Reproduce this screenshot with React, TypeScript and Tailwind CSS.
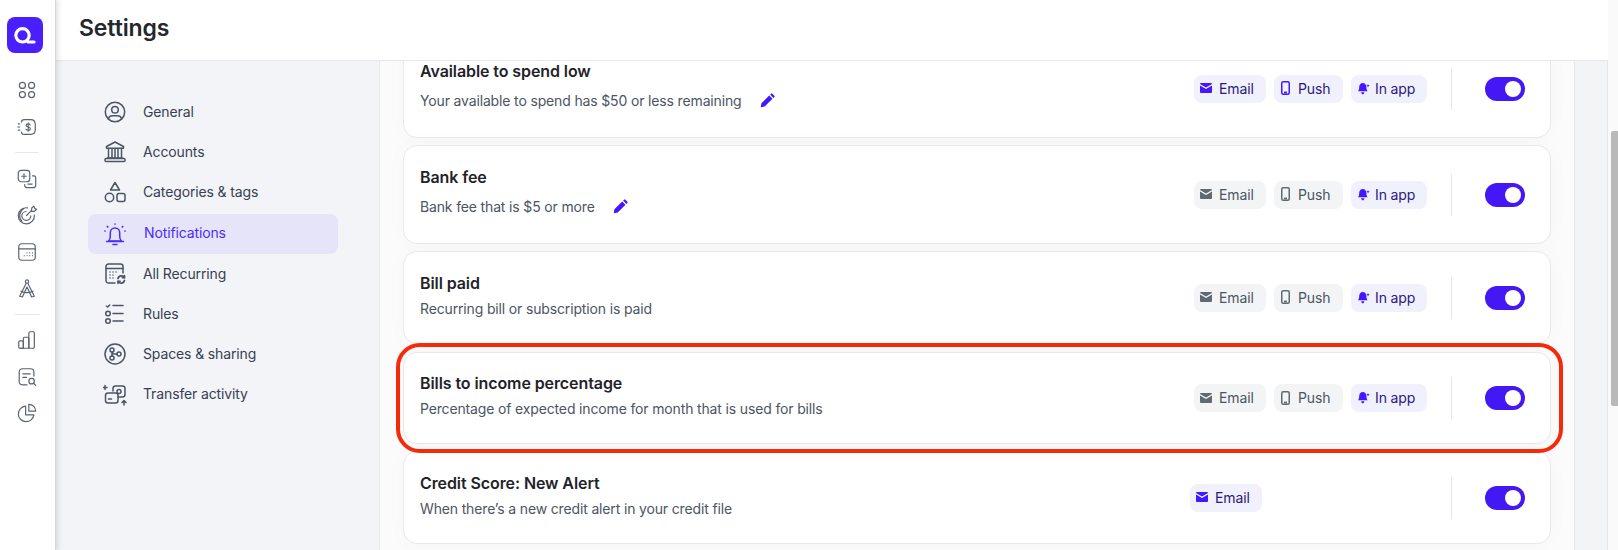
import React from "react";

type P = { className?: string };
const S = ({ className, children, size = 24, sw = 1.5 }: P & { children: React.ReactNode; size?: number; sw?: number }) => (
  <svg width={size} height={size} viewBox="0 0 24 24" fill="none" stroke="currentColor" strokeWidth={sw} strokeLinecap="round" strokeLinejoin="round" className={className}>
    {children}
  </svg>
);

const side: Record<string, React.ReactNode> = {
  grid: (<><circle cx="7" cy="7" r="3.300" /><circle cx="17" cy="7" r="3.300" /><circle cx="7" cy="17" r="3.300" /><circle cx="17" cy="17" r="3.300" /></>),
  dollar: (<><path d="M6 6.500C6 4.500 7.500 4 9 4h7c3 0 5 1.500 5 5v6c0 3.500-2 5-5 5H9c-1.500 0-3-.5-3-2.500" /><path d="M2.500 8.500H4M2 12h2M2.500 15.500H4" /><path d="M15.500 9.800c-.5-.8-1.300-1.200-2.300-1.200-1.200 0-2.100.6-2.100 1.700 0 2.300 4.500 1.200 4.500 3.500 0 1.100-1 1.800-2.300 1.800-1 0-2-.4-2.400-1.200M13.300 7.300v9.400" strokeWidth={1.200} /></>),
  plusminus: (<><rect x="2.500" y="2.500" width="12.500" height="12.500" rx="3" /><path d="M8.700 6.500v5M6.200 9h5" /><path d="M18 8.500h1.500a2 2 0 0 1 2 2V19a2.500 2.500 0 0 1-2.500 2.500h-7A2.500 2.500 0 0 1 9.500 19v-1" /><path d="M13 17.500h4.500" /></>),
  target: (<><path d="M12.500 4.200A8.800 8.800 0 1 0 20 12" /><path d="M11 8.200A4.800 4.800 0 1 0 16 13" /><path d="M8.500 5A9 9 0 0 0 6.500 19" /><path d="M11.500 12.500 17 7l.3-3 2.200-1.500 1 2.500 2 .7L20 8l-3 .1" /></>),
  calendar: (<><rect x="3" y="3" width="18" height="18" rx="3.500" /><path d="M3 8.500h18" /><path d="M9 16v.01M12 16v.01M15 16v.01M18 16v.01M12 13v.01M15 13v.01M18 13v.01" strokeWidth={1.200} /></>),
  compass: (<><circle cx="12" cy="5" r="1.800" /><path d="M11 7 4 21l3 .8L12 11l5 10.800 3-.8-7-14" /><path d="M5.500 15.500c4 2 9 2 13 0" /></>),
  bars: (<><rect x="3" y="13" width="5" height="8" rx="1.500" /><path d="M8 21V10.500A1.500 1.500 0 0 1 9.500 9H13a1 1 0 0 1 1 1v11" /><path d="M14 21V4.500A1.500 1.500 0 0 1 15.500 3H19a1 1 0 0 1 1 1v15.500a1.500 1.500 0 0 1-1.500 1.500H4.500" /></>),
  searchdoc: (<><path d="M12 20.500H7a3.500 3.500 0 0 1-3.500-3.500V6.500A3.500 3.500 0 0 1 7 3h9a3.500 3.500 0 0 1 3.500 3.500V11" /><path d="M7.500 8.500h8M7.500 12.500h4" /><circle cx="17" cy="16.500" r="3" /><path d="m19.300 19 2.200 2.200" /></>),
  pie: (<><path d="M10.500 4.500a8.500 8.500 0 1 0 9 9.500h-9z" /><path d="M14 2.500a7.500 7.500 0 0 1 7.500 7.500H14z" /></>),
};

const nav: Record<string, React.ReactNode> = {
  general: (<><circle cx="12" cy="12" r="9.700" /><circle cx="12" cy="9.800" r="3.300" /><path d="M5.500 18.500c.5-1.800 2-2.800 4-2.800h5c2 0 3.500 1 4 2.800" /></>),
  accounts: (<><path d="M12 2 3.500 6.500v1.700h17V6.500z" /><path d="M5.500 8.500V18M9 8.500V18M12 8.500V18M15 8.500V18M18.500 8.500V18M4.500 18h15" /><rect x="2" y="18.500" width="20" height="3" rx="1" /></>),
  categories: (<><path d="M12 2.500 16.500 10h-9z" /><circle cx="6.500" cy="17.500" r="4.200" /><rect x="14" y="13.500" width="8" height="8" rx="2" /></>),
  bell: (<><path d="M5.500 19c1.200-1 1.800-2.500 1.800-4.500v-3.800a4.700 4.700 0 0 1 9.400 0v3.800c0 2 .6 3.500 1.800 4.500z" /><path d="M3.500 19.500h17" /><path d="M10 22.500h4" /><path d="M2 9v.01M4.300 4.500l.5.5M19.300 5l.5-.5M22 9v.01M12 2v.01" strokeWidth={1.700} /></>),
  recurring: (<><path d="M12 21H5.500A2.500 2.500 0 0 1 3 18.500v-14A2.500 2.500 0 0 1 5.500 2h12A2.500 2.500 0 0 1 20 4.500V11" /><path d="M3 6.500h17" /><path d="M7 10v.01M10 10v.01M13 10v.01M7 13v.01M10 13v.01M7 16v.01M10 16v.01" /><path d="M15 16.500a3.500 3.500 0 0 1 6-1.500l.5.500M21.500 18.500a3.500 3.500 0 0 1-6 1.500l-.5-.5" strokeWidth={1.800} /><path d="M21.500 13.500v2.200h-2.200M15 21.500v-2.200h2.200" strokeWidth={1.500} /></>),
  rules: (<><path d="m3.500 4 1.200 1 2-2M10 3.500h10M10 11.500h10M10 19h10" /><circle cx="5" cy="11.500" r="2.300" /><circle cx="5" cy="19" r="2.300" /></>),
  spaces: (<><circle cx="12" cy="12" r="10" /><circle cx="9" cy="8" r="2" /><circle cx="9" cy="16" r="2" /><circle cx="16" cy="12" r="2" /><path d="M9 10v4M14 12h-2a3 3 0 0 1-3-2" /></>),
  transfer: (<><path d="M10 9V6.500A2.500 2.500 0 0 1 12.500 4h7A2.500 2.500 0 0 1 22 6.500v6a2.500 2.500 0 0 1-2.500 2.500H15" /><circle cx="16" cy="9.500" r="2" /><rect x="2.500" y="11" width="12.500" height="10" rx="2.500" /><path d="M5.500 17h3M2 3.500v4M0 5.500h4M21 23v-4M19 20.500l2-2 2 2" /></>),
};

const NavItem = ({ icon, label, active }: { icon: string; label: string; active?: boolean }) => (
  <div className={`flex h-[40px] w-[250px] items-center rounded-lg pl-[15px] text-[14px] tracking-[-0.13px] ${active ? "mt-[2px] bg-[#e6e4f8] pb-[1px] text-[#4a2cff]" : "text-[#374151]"}`}>
    <span className={active ? "text-[#4a2cff]" : "text-[#4b5563]"}>
      <S size={24}>{nav[icon]}</S>
    </span>
    <span className={active ? "mb-[2px] ml-[17px]" : "mb-[2px] ml-[16px]"}>{label}</span>
  </div>
);

const MailIcon = () => (
  <svg width="12" height="10" viewBox="0 0 12 10" fill="currentColor"><path d="M1 0h10a1 1 0 0 1 1 1L6 4.500 0 1a1 1 0 0 1 1-1zM0 2.500 6 6l6-3.500V9a1 1 0 0 1-1 1H1a1 1 0 0 1-1-1z" /></svg>
);
const PhoneIcon = () => (
  <svg width="9" height="14" viewBox="0 0 9 14" fill="none" stroke="currentColor" strokeWidth="1.500"><rect x=".75" y=".75" width="7.500" height="12.500" rx="1.500" /><path d="M3 11.500h3" strokeWidth="1.800" /></svg>
);
const BellIcon = () => (
  <svg width="12" height="13" viewBox="0 0 12 13" fill="currentColor"><path d="M4.800 1C7 1 8.400 2.700 8.400 5c0 2.200.5 3.300 1.200 4.300H0C.7 8.300 1.200 7.200 1.200 5 1.200 2.700 2.600 1 4.800 1zM3.200 10.200h3.200C6.200 11.600 5.600 12.200 4.800 12.200S3.400 11.600 3.200 10.200z" /><path d="M10 2l.5 1.300 1.400.5-1.400.5-.5 1.300-.5-1.300-1.400-.5 1.400-.5z" /></svg>
);

const Chip = ({ kind, on }: { kind: "email" | "push" | "app"; on: boolean }) => (
  <div className={`flex h-[28px] items-center rounded-lg pb-[1px] text-[14px] tracking-[-0.13px] ${on ? "bg-[#f1f0fd] text-[#2a1a80]" : "bg-[#f3f4f6] text-[#4b5563]"} ${kind === "email" ? "w-[72px] pl-[6px]" : kind === "push" ? "w-[69px] pl-[7px]" : "w-[76px] pl-[7px]"}`}>
    <span className={`flex ${on ? "text-[#4318ff]" : "text-[#5f6b73]"} ${kind === "email" ? "mr-[7px]" : kind === "push" ? "mr-[8px]" : "mr-[5px]"}`}>
      {kind === "email" ? <MailIcon /> : kind === "push" ? <PhoneIcon /> : <BellIcon />}
    </span>
    {kind === "email" ? "Email" : kind === "push" ? "Push" : "In app"}
  </div>
);

const Pencil = () => (
  <svg width="15" height="15" viewBox="0 0 16 16" fill="#4318ff" className="ml-[18px]"><path d="M0.800 15.200 1.500 11 9.800 2.700l3.500 3.500L5 14.500zM10.800 1.700l1-1a1 1 0 0 1 1.400 0l2.100 2.100a1 1 0 0 1 0 1.400l-1 1z" /></svg>
);

const Card = ({ title, desc, chips, pencil, highlight, className = "" }: { title: string; desc: string; chips: [boolean, boolean, boolean] | null; pencil?: boolean; highlight?: boolean; className?: string }) => (
  <div className={`relative flex w-[1148px] shrink-0 items-center rounded-[14px] border border-[#e8e9eb] bg-white pl-[16px] pr-[25px] shadow-[0_0_24px_rgba(0,0,0,0.025)] ${className}`}>
    <div className={`flex-1 ${highlight ? "pt-[18px]" : "pt-[19px]"} ${pencil ? "pb-[24px]" : "pb-[25px]"}`}>
      <div className="h-[24px] text-[16px] font-semibold leading-[24px] tracking-[-0.09px] text-[#1f2329]">{title}</div>
      <div className={`flex items-center text-[14px] tracking-[-0.15px] text-[#4b5563] ${pencil ? "mt-[4px] h-[26px]" : "mt-[3px] h-[20px]"}`}>
        {desc}
        {pencil && <Pencil />}
      </div>
    </div>
    <div className={`flex w-[237px] gap-[8px] ${chips ? "justify-end" : "justify-start"}`}>
      {chips ? (
        <>
          <Chip kind="email" on={chips[0]} />
          <Chip kind="push" on={chips[1]} />
          <Chip kind="app" on={chips[2]} />
        </>
      ) : (
        <Chip kind="email" on />
      )}
    </div>
    <div className="ml-[24px] h-[42px] w-px bg-[#e5e7eb]" />
    <div className="ml-[33px] flex h-[24px] w-[40px] items-center justify-end rounded-full bg-[#4318f5] pr-[4px]">
      <div className="h-[16px] w-[16px] rounded-full bg-white" />
    </div>
    {highlight && <div className="pointer-events-none absolute -top-[10px] -bottom-[10px] -left-[8px] -right-[13px] z-10 rounded-[24px] border-[4px] border-[#f52a0a]" />}
  </div>
);

export default function App() {
  const sideGroups = [["grid", "dollar"], ["plusminus", "target", "calendar", "compass"], ["bars", "searchdoc", "pie"]];
  return (
    <div className="flex h-[550px] w-[1618px] overflow-hidden bg-white font-['Inter',sans-serif]">
      <aside className="relative z-10 flex w-[56px] shrink-0 flex-col items-center border-r border-[#d4d6da] bg-white shadow-[2px_0_5px_rgba(0,0,0,0.12)]">
        <div className="mt-[17px] mr-[5px] flex h-[36px] w-[36px] items-center justify-center rounded-[8px] bg-[#4a1fff]">
          <svg width="36" height="36" viewBox="0 0 36 36" fill="none" stroke="#fff" strokeWidth="3.200" strokeLinecap="round"><circle cx="15.500" cy="18.300" r="6.700" /><path d="M21 25h6" /></svg>
        </div>
        <div className="mt-[26px] mr-[1px] flex w-[24px] flex-col items-center text-[#5b6470]">
          {sideGroups.map((g, i) => (
            <div key={i} className="flex flex-col items-center">
              {i > 0 && <div className="my-[14.500px] h-px w-[24px] bg-[#e5e7eb]" />}
              <div className="flex flex-col items-center gap-[14.500px]">
                {g.map((k) => (<S key={k} size={22} sw={1.300}>{side[k]}</S>))}
              </div>
            </div>
          ))}
        </div>
      </aside>
      <div className="flex min-w-0 flex-1 flex-col">
        <header className="flex h-[61px] shrink-0 items-center border-b border-[#e5e7eb] bg-white pl-[23px] pb-[3px] text-[23px] font-semibold tracking-[-0.1px] text-[#23272e]">
          Settings
        </header>
        <div className="flex min-h-0 flex-1 bg-[#f3f4f7]">
          <nav className="w-[323px] shrink-0 pl-[32px] pt-[31px]">
            <NavItem icon="general" label="General" />
            <NavItem icon="accounts" label="Accounts" />
            <NavItem icon="categories" label="Categories & tags" />
            <NavItem icon="bell" label="Notifications" active />
            <NavItem icon="recurring" label="All Recurring" />
            <NavItem icon="rules" label="Rules" />
            <NavItem icon="spaces" label="Spaces & sharing" />
            <NavItem icon="transfer" label="Transfer activity" />
          </nav>
          <main className="flex w-[1196px] shrink-0 flex-col gap-[7px] overflow-hidden border-x border-[#e5e7eb] bg-[#fbfbfb] pl-[23px]">
            <Card className="-mt-[22px]" title="Available to spend low" desc="Your available to spend has $50 or less remaining" chips={[true, true, true]} pencil />
            <Card title="Bank fee" desc="Bank fee that is $5 or more" chips={[false, false, true]} pencil />
            <Card className="mb-[1px]" title="Bill paid" desc="Recurring bill or subscription is paid" chips={[false, false, true]} />
            <Card title="Bills to income percentage" desc="Percentage of expected income for month that is used for bills" chips={[false, false, true]} highlight />
            <Card title="Credit Score: New Alert" desc="When there’s a new credit alert in your credit file" chips={null} />
          </main>
          <div className="w-[33px] shrink-0 border-r border-[#e5e7eb] bg-[#f3f4f6]" />
        </div>
      </div>
      <div className="w-[10px] shrink-0 bg-[#fafafa] pl-[3px] pt-[131px]">
        <div className="h-[275px] w-[7px] rounded-l-[2px] bg-[#b9b9b9]" />
      </div>
    </div>
  );
}
